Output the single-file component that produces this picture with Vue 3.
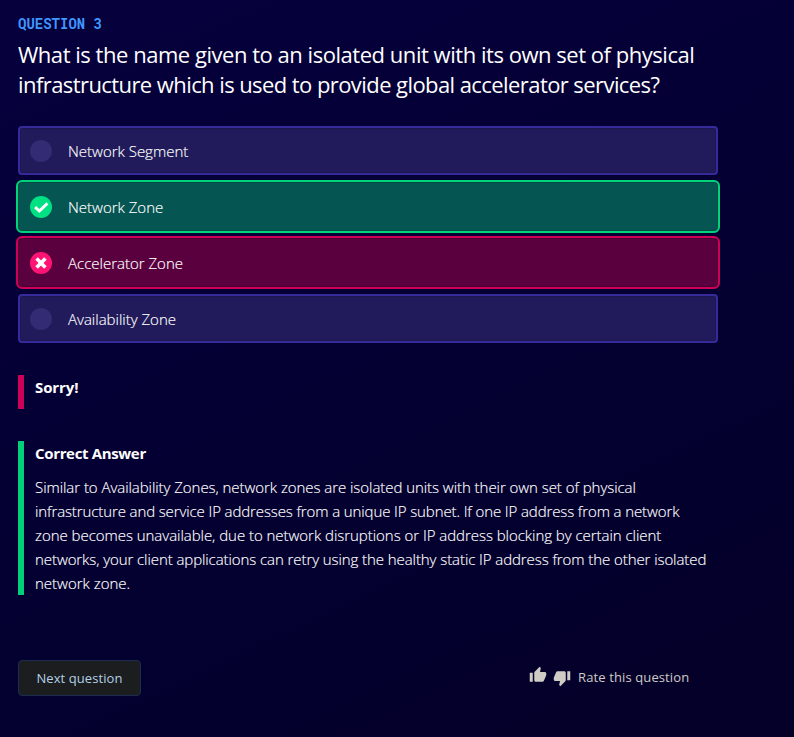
<script setup>
const title = [
  'What is the name given to an isolated unit with its own set of physical',
  'infrastructure which is used to provide global accelerator services?',
]
const options = [
  { label: 'Network Segment', state: 'plain' },
  { label: 'Network Zone', state: 'right' },
  { label: 'Accelerator Zone', state: 'wrong' },
  { label: 'Availability Zone', state: 'plain' },
]
const explanation = [
  'Similar to Availability Zones, network zones are isolated units with their own set of physical',
  'infrastructure and service IP addresses from a unique IP subnet. If one IP address from a network',
  'zone becomes unavailable, due to network disruptions or IP address blocking by certain client',
  'networks, your client applications can retry using the healthy static IP address from the other isolated',
  'network zone.',
]
</script>

<template>
  <main class="quiz">
    <p class="eyebrow">QUESTION 3</p>
    <h1 class="title">
      <span v-for="(line, i) in title" :key="i" class="line" :class="'t' + i">{{ line }}</span>
    </h1>

    <ul class="options">
      <li v-for="o in options" :key="o.label" class="option" :class="o.state">
        <span class="dot">
          <svg v-if="o.state === 'right'" viewBox="0 0 22 22" width="22" height="22">
            <path d="M5.1 11.2 L9.4 15 L17.4 7.4" fill="none" stroke="#fff" stroke-width="3" />
          </svg>
          <svg v-if="o.state === 'wrong'" viewBox="0 0 22 22" width="22" height="22">
            <path d="M6.6 6.6 L15.4 15.4 M15.4 6.6 L6.6 15.4" fill="none" stroke="#fff" stroke-width="3.6" />
          </svg>
        </span>
        <span class="label">{{ o.label }}</span>
      </li>
    </ul>

    <section class="note sorry"><h2>Sorry!</h2></section>

    <section class="note correct">
      <h2>Correct Answer</h2>
      <p><span v-for="(line, i) in explanation" :key="i" class="line" :class="'b' + i">{{ line }}</span></p>
    </section>

    <footer class="footer">
      <button class="next" type="button"><span>Next question</span></button>
      <div class="rate">
        <svg class="up" viewBox="0 0 24 24" width="18" height="18">
          <path d="M1 21h4V9H1v12zm22-11c0-1.1-.9-2-2-2h-6.31l.95-4.57.03-.32c0-.41-.17-.79-.44-1.06L14.17 1 7.59 7.59C7.22 7.95 7 8.45 7 9v10c0 1.1.9 2 2 2h9c.83 0 1.54-.5 1.84-1.22l3.02-7.05c.09-.23.14-.47.14-.73v-2z" />
        </svg>
        <svg class="down" viewBox="0 0 24 24" width="18" height="18">
          <path d="M15 3H6c-.83 0-1.54.5-1.84 1.22l-3.02 7.05c-.09.23-.14.47-.14.73v2c0 1.1.9 2 2 2h6.31l-.95 4.57-.03.32c0 .41.17.79.44 1.06L9.83 23l6.59-6.59c.36-.36.58-.86.58-1.41V5c0-1.1-.9-2-2-2zm4 0v12h4V3h-4z" />
        </svg>
        <span class="rate-text">Rate this question</span>
      </div>
    </footer>
  </main>
</template>

<style>
body { background: #040030; }
</style>

<style scoped>
.quiz {
  box-sizing: border-box;
  height: 737px;
  padding: 14px 76px 0 18px;
  overflow: hidden;
  background: linear-gradient(155deg, #06003d 0%, #040032 50%, #040028 100%);
  color: #fff;
  font-family: "Open Sans", "Noto Sans", sans-serif;
}
.eyebrow {
  margin: 0;
  height: 25px;
  font: 700 14px/20px "Roboto Mono", "DejaVu Sans Mono", monospace;
  color: #3f97ff;
}
.title { margin: 0; font-size: 22px; line-height: 30px; font-weight: 400; }
.line { display: block; width: max-content; white-space: nowrap; }
.t0 { letter-spacing: -0.467px; }
.t1 { letter-spacing: -0.575px; }
.b0 { letter-spacing: -0.05px; }
.b1 { letter-spacing: -0.11px; }
.b2 { letter-spacing: -0.035px; }
.b3 { letter-spacing: -0.078px; }
.options {
  display: flex;
  flex-direction: column;
  gap: 7px;
  margin: 27px 0 0;
  padding: 0;
  list-style: none;
}
.option {
  box-sizing: border-box;
  display: flex;
  align-items: center;
  height: 49px;
  padding: 0 10px;
  gap: 16px;
  border: 2px solid #352b9b;
  border-radius: 4px;
  background: #211b5b;
  box-shadow: inset 0 0 0 1px rgba(0, 0, 0, 0.14);
  font-size: 15px;
  font-weight: 300;
}
.right, .wrong { height: 53px; margin: -2px; padding: 0 12px; border-radius: 6px; }
.right { border-color: #00d47b; background: #055552; }
.wrong { border-color: #cc0056; background: #5a003e; }
.dot { width: 22px; height: 22px; border-radius: 50%; background: #342b75; }
.dot svg { display: block; }
.right .dot { background: #00e184; }
.wrong .dot { background: #ff1374; }
.label, .note p { -webkit-text-stroke: 0.15px #fff; }
.note { padding-left: 11px; border-left: 6px solid #cc0056; box-sizing: border-box; }
.note h2 { margin: 0; font-size: 15px; line-height: 24px; font-weight: 700; letter-spacing: -0.1px; }
.sorry { height: 34px; margin-top: 32px; }
.correct { height: 154px; margin-top: 32px; border-color: #00d07a; }
.correct h2 { letter-spacing: -0.34px; }
.note p { margin: 10px 0 0; font-size: 15px; line-height: 24px; font-weight: 300; }
.footer { display: flex; justify-content: space-between; align-items: center; margin-top: 65px; height: 36px; }
.next {
  box-sizing: border-box;
  width: 123px;
  height: 36px;
  padding: 0;
  border: 1px solid #1c2b50;
  border-radius: 4px;
  background: #1b1d1e;
  color: #b4d0e6;
  font: 400 13px/20px "Open Sans", "Noto Sans", sans-serif;
  letter-spacing: 0.08px;
}
.rate { display: flex; align-items: center; width: 189px; color: #cfcbc5; font-size: 13px; white-space: nowrap; }
.rate svg { fill: #cfcbc5; flex: none; }
.rate-text { margin-bottom: 2px; letter-spacing: 0.12px; }
.up { margin-bottom: 6px; margin-right: 6px; }
.down { margin-right: 7px; }
</style>
